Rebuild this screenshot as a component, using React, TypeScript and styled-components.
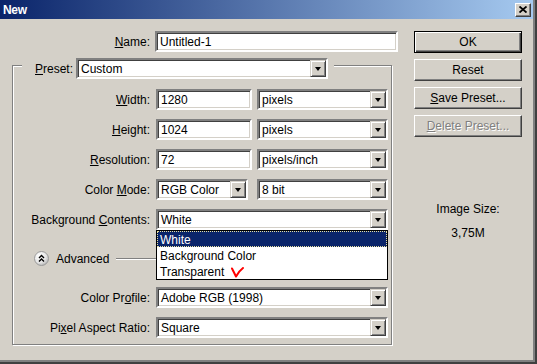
import React from "react";
import styled, { createGlobalStyle, css } from "styled-components";

const GlobalStyle = createGlobalStyle`
  html, body { margin: 0; padding: 0; background: #d4d0c8; }
  body {
    font-family: "Liberation Sans", Arial, sans-serif;
    font-size: 12px;
    color: #000;
  }
  * { box-sizing: border-box; }
`;

const sunken = css`
  border: 2px solid;
  border-color: #808080 #fff #fff #808080;
  box-shadow: inset 1px 1px 0 #404040, inset -1px -1px 0 #d4d0c8;
  background: #fff;
`;

const Window = styled.div`
  width: 537px;
  height: 364px;
  background: #d4d0c8;
  border-right: 2px solid #404040;
  border-bottom: 2px solid #404040;
  box-shadow: inset -2px -2px 0 #808080;
  display: flex;
  flex-direction: column;
  overflow: hidden;
`;

const TitleBar = styled.div`
  height: 19px;
  margin-right: 2px;
  flex: none;
  background: linear-gradient(to right, #0a246a, #a6caf0);
  display: flex;
  align-items: center;
  justify-content: space-between;
  padding: 0 2px 0 3px;
`;

const Title = styled.span`
  color: #fff;
  font-weight: bold;
  font-size: 12px;
  letter-spacing: -0.3px;
`;

const CloseButton = styled.div`
  width: 16px;
  height: 14px;
  background: #d4d0c8;
  border: 1px solid;
  border-color: #fff #404040 #404040 #fff;
  box-shadow: inset -1px -1px 0 #808080;
  display: flex;
  align-items: center;
  justify-content: center;
`;

const Body = styled.div`
  flex: 1;
  display: flex;
  padding-top: 12px;
`;

const LeftPanel = styled.div`
  width: 400px;
  margin-right: 14px;
  display: flex;
  flex-direction: column;
`;

const NameRow = styled.div`
  display: grid;
  grid-template-columns: 150px 243px;
  column-gap: 5px;
  align-items: center;
  height: 21px;
`;

const Label = styled.span`
  text-align: right;
  white-space: nowrap;
`;

const Key = styled.u`
  text-decoration: underline;
  text-underline-offset: 1px;
`;

const TextField = styled.input<{ $w?: number }>`
  ${sunken};
  width: ${(p) => (p.$w ? `${p.$w}px` : "100%")};
  height: 21px;
  padding: 0 3px;
  font: inherit;
  color: #000;
  outline: none;
  margin: 0;
`;

const Group = styled.div`
  margin: 13px 0 0 12px;
  width: 380px;
  border: 1px solid #808080;
  box-shadow: inset 1px 1px 0 #fff, 1px 1px 0 #fff;
  display: flex;
  flex-direction: column;
  padding-bottom: 6px;
`;

const GroupHeader = styled.div`
  align-self: flex-start;
  margin: -8px 0 0 9px;
  padding: 0 6px 0 13px;
  background: #d4d0c8;
  display: flex;
  align-items: center;
  gap: 3px;
  height: 21px;
`;

const Rows = styled.div`
  margin-top: 10px;
  display: flex;
  flex-direction: column;
  gap: 9px;
`;

const Row = styled.div`
  display: grid;
  grid-template-columns: 137px 232px;
  column-gap: 6px;
  align-items: center;
  height: 21px;
`;

const Pair = styled.div`
  display: flex;
  justify-content: space-between;
`;

const SelectBox = styled.div<{ $w?: number }>`
  ${sunken};
  position: relative;
  width: ${(p) => (p.$w ? `${p.$w}px` : "100%")};
  height: 21px;
  display: flex;
  align-items: center;
`;

const SelectText = styled.span`
  flex: 1;
  padding-left: 3px;
  white-space: nowrap;
  overflow: hidden;
`;

const ArrowButton = styled.div`
  width: 16px;
  height: 17px;
  flex: none;
  background: #d4d0c8;
  border: 1px solid;
  border-color: #d4d0c8 #404040 #404040 #d4d0c8;
  box-shadow: inset 1px 1px 0 #fff, inset -1px -1px 0 #808080;
  display: flex;
  align-items: center;
  justify-content: center;
`;

const Triangle = styled.span`
  width: 0;
  height: 0;
  border-left: 3.5px solid transparent;
  border-right: 3.5px solid transparent;
  border-top: 4px solid #000;
  margin-top: 1px;
`;

const DropList = styled.div`
  position: absolute;
  top: 19px;
  left: -2px;
  width: 232px;
  height: 50px;
  background: #fff;
  border: 1px solid #000;
  z-index: 2;
  display: flex;
  flex-direction: column;
`;

const ListItem = styled.div<{ $selected?: boolean }>`
  height: 16px;
  padding: 2px 0 0 3px;
  display: flex;
  align-items: center;
  white-space: nowrap;
  ${(p) =>
    p.$selected &&
    css`
      background: #0a246a;
      color: #fff;
      outline: 1px dotted #e8e0a0;
      outline-offset: -1px;
    `}
`;

const AdvancedRow = styled.div`
  height: 39px;
  display: flex;
  align-items: center;
  padding: 0 3px 0 21px;
  gap: 7px;
`;

const Rule = styled.div`
  flex: 1;
  height: 2px;
  border-top: 1px solid #808080;
  border-bottom: 1px solid #fff;
`;

const RightPanel = styled.div`
  width: 108px;
  display: flex;
  flex-direction: column;
`;

const ButtonStack = styled.div`
  display: flex;
  flex-direction: column;
  gap: 6px;
`;

const Button = styled.div<{ $default?: boolean; $disabled?: boolean }>`
  height: 22px;
  background: #d4d0c8;
  display: flex;
  align-items: center;
  justify-content: center;
  white-space: nowrap;
  border: 1px solid;
  border-color: #fff #404040 #404040 #fff;
  box-shadow: inset -1px -1px 0 #808080;
  ${(p) =>
    p.$default &&
    css`
      border-color: #000;
      box-shadow: inset 1px 1px 0 #fff, inset -1px -1px 0 #404040,
        inset -2px -2px 0 #808080;
    `}
  ${(p) =>
    p.$disabled &&
    css`
      color: #808080;
      text-shadow: 1px 1px 0 #fff;
    `}
`;

const ImageSize = styled.div`
  margin-top: 65px;
  display: flex;
  flex-direction: column;
  align-items: center;
  gap: 10px;
  line-height: 14px;
`;

const Select = ({ value, w }: { value: string; w?: number }) => (
  <SelectBox $w={w}>
    <SelectText>{value}</SelectText>
    <ArrowButton>
      <Triangle />
    </ArrowButton>
  </SelectBox>
);

const AdvancedIcon = () => (
  <svg width="15" height="15" viewBox="0 0 15 15">
    <defs>
      <radialGradient id="advg" cx="0.35" cy="0.3" r="0.8">
        <stop offset="0" stopColor="#ffffff" />
        <stop offset="0.6" stopColor="#e6e6e6" />
        <stop offset="1" stopColor="#aaaaaa" />
      </radialGradient>
    </defs>
    <circle cx="7.5" cy="7.5" r="7" fill="url(#advg)" stroke="#9a9a9a" strokeWidth="1" />
    <polyline points="5,7 7.5,4.5 10,7" fill="none" stroke="#000" strokeWidth="1.4" />
    <polyline points="5,10.5 7.5,8 10,10.5" fill="none" stroke="#000" strokeWidth="1.4" />
  </svg>
);

const CheckMark = () => (
  <svg width="13" height="11" viewBox="0 0 13 11" style={{ marginLeft: 7 }}>
    <path d="M1 1.5 L5 9.5 Q8 4 12 1" fill="none" stroke="#ff0000" strokeWidth="2" strokeLinecap="round" strokeLinejoin="round" />
  </svg>
);

export default function App() {
  return (
    <>
      <GlobalStyle />
      <Window>
        <TitleBar>
          <Title>New</Title>
          <CloseButton>
            <svg width="8" height="7" viewBox="0 0 8 7">
              <path d="M0.5 0.5 L7.5 6.5 M7.5 0.5 L0.5 6.5" stroke="#000" strokeWidth="1.8" />
            </svg>
          </CloseButton>
        </TitleBar>
        <Body>
          <LeftPanel>
            <NameRow>
              <Label>
                <Key>N</Key>ame:
              </Label>
              <TextField readOnly value="Untitled-1" />
            </NameRow>
            <Group>
              <GroupHeader>
                <Label>
                  <Key>P</Key>reset:
                </Label>
                <Select value="Custom" w={252} />
              </GroupHeader>
              <Rows>
                <Row>
                  <Label>
                    <Key>W</Key>idth:
                  </Label>
                  <Pair>
                    <TextField readOnly value="1280" $w={96} />
                    <Select value="pixels" w={131} />
                  </Pair>
                </Row>
                <Row>
                  <Label>
                    <Key>H</Key>eight:
                  </Label>
                  <Pair>
                    <TextField readOnly value="1024" $w={96} />
                    <Select value="pixels" w={131} />
                  </Pair>
                </Row>
                <Row>
                  <Label>
                    <Key>R</Key>esolution:
                  </Label>
                  <Pair>
                    <TextField readOnly value="72" $w={96} />
                    <Select value="pixels/inch" w={131} />
                  </Pair>
                </Row>
                <Row>
                  <Label>
                    Color <Key>M</Key>ode:
                  </Label>
                  <Pair>
                    <Select value="RGB Color" w={92} />
                    <Select value="8 bit" w={131} />
                  </Pair>
                </Row>
                <Row>
                  <Label>
                    Background <Key>C</Key>ontents:
                  </Label>
                  <SelectBox>
                    <SelectText>White</SelectText>
                    <ArrowButton>
                      <Triangle />
                    </ArrowButton>
                    <DropList>
                      <ListItem $selected>White</ListItem>
                      <ListItem>Background Color</ListItem>
                      <ListItem>
                        Transparent
                        <CheckMark />
                      </ListItem>
                    </DropList>
                  </SelectBox>
                </Row>
                <AdvancedRow>
                  <AdvancedIcon />
                  <span>Advanced</span>
                  <Rule />
                </AdvancedRow>
                <Row>
                  <Label>
                    Color Pr<Key>o</Key>file:
                  </Label>
                  <Select value="Adobe RGB (1998)" />
                </Row>
                <Row>
                  <Label>
                    Pi<Key>x</Key>el Aspect Ratio:
                  </Label>
                  <Select value="Square" />
                </Row>
              </Rows>
            </Group>
          </LeftPanel>
          <RightPanel>
            <ButtonStack>
              <Button $default>OK</Button>
              <Button>Reset</Button>
              <Button>
                <span>
                  <Key>S</Key>ave Preset...
                </span>
              </Button>
              <Button $disabled>
                <span>
                  <Key>D</Key>elete Preset...
                </span>
              </Button>
            </ButtonStack>
            <ImageSize>
              <span>Image Size:</span>
              <span>3,75M</span>
            </ImageSize>
          </RightPanel>
        </Body>
      </Window>
    </>
  );
}
